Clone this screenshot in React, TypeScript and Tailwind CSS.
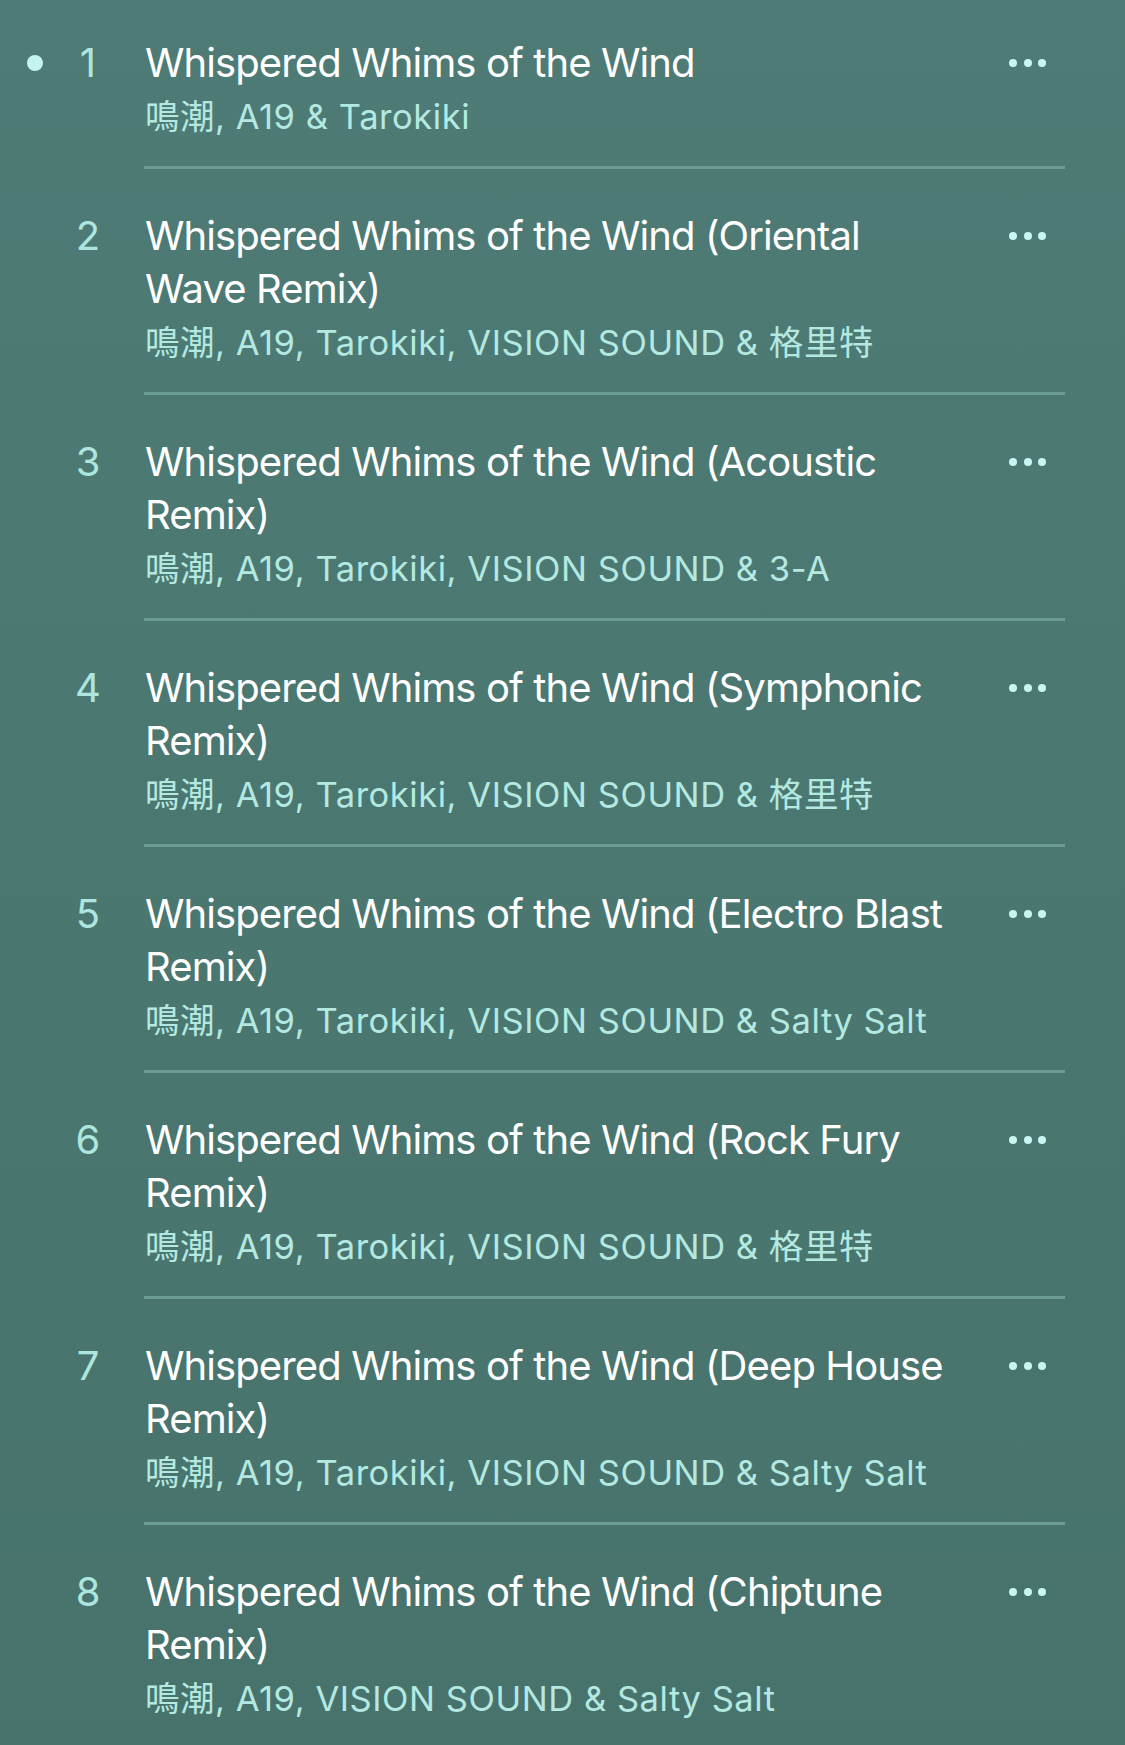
const tracks = [
  { title: "Whispered Whims of the Wind", artists: "鳴潮, A19 & Tarokiki", playing: true },
  { title: "Whispered Whims of the Wind (Oriental Wave Remix)", artists: "鳴潮, A19, Tarokiki, VISION SOUND & 格里特" },
  { title: "Whispered Whims of the Wind (Acoustic Remix)", artists: "鳴潮, A19, Tarokiki, VISION SOUND & 3-A" },
  { title: "Whispered Whims of the Wind (Symphonic Remix)", artists: "鳴潮, A19, Tarokiki, VISION SOUND & 格里特" },
  { title: "Whispered Whims of the Wind (Electro Blast Remix)", artists: "鳴潮, A19, Tarokiki, VISION SOUND & Salty Salt" },
  { title: "Whispered Whims of the Wind (Rock Fury Remix)", artists: "鳴潮, A19, Tarokiki, VISION SOUND & 格里特" },
  { title: "Whispered Whims of the Wind (Deep House Remix)", artists: "鳴潮, A19, Tarokiki, VISION SOUND & Salty Salt" },
  { title: "Whispered Whims of the Wind (Chiptune Remix)", artists: "鳴潮, A19, VISION SOUND & Salty Salt" },
];

function MoreDots() {
  return (
    <div className="flex h-[53px] items-center gap-[6.5px]">
      <span className="h-2 w-2 rounded-full bg-[#c8f7f3]" />
      <span className="h-2 w-2 rounded-full bg-[#c8f7f3]" />
      <span className="h-2 w-2 rounded-full bg-[#c8f7f3]" />
    </div>
  );
}

export default function App() {
  return (
    <div
      className="min-h-screen w-full overflow-hidden bg-gradient-to-b from-[#4e7b75] to-[#48736d]"
      style={{ fontFamily: '"Inter", "Noto Sans CJK TC", sans-serif' }}
    >
      {tracks.map((t, i) => (
        <div key={i} className="flex">
          <div className={i === 0 ? "w-[144px] shrink-0 pt-[36px]" : "w-[144px] shrink-0 pt-10"}>
            <div className="flex h-[53px] items-center">
              <span
                className={
                  t.playing
                    ? "ml-[27px] h-4 w-4 rounded-full bg-[#c4f4ef]"
                    : "ml-[27px] h-4 w-4"
                }
              />
              <span className="ml-[15px] w-[60px] text-center text-[40px] leading-[53px] text-[#ade6de]">
                {i + 1}
              </span>
            </div>
          </div>
          <div
            className={
              i === 0
                ? "mr-[60px] flex flex-1 border-b-[3px] border-[#6b9c95] pt-[36px] pb-[25px]"
                : "mr-[60px] flex flex-1 border-b-[3px] border-[#6b9c95] pt-10 pb-[25px]"
            }
          >
            <div className="min-w-0 flex-1 pl-[1px]">
              <div className="text-[40px] leading-[53px] tracking-[-0.9px] text-white">{t.title}</div>
              <div className="mt-1 text-[34.5px] leading-[48px] tracking-[0.55px] text-[#b3e9e1]">
                {t.artists}
              </div>
            </div>
            <div className="flex w-[107px] shrink-0 justify-end pr-[19px]">
              <MoreDots />
            </div>
          </div>
        </div>
      ))}
    </div>
  );
}
